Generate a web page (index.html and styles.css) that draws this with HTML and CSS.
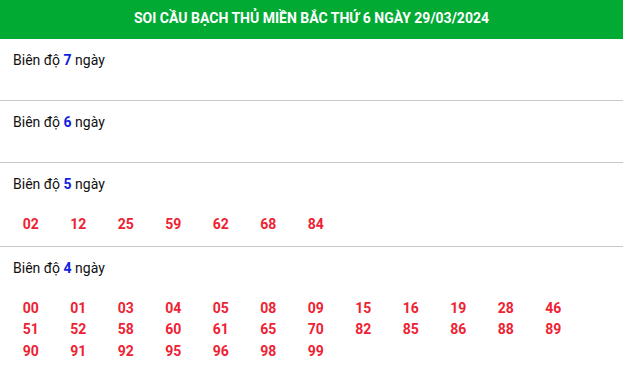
FILE: index.html
```html
<!DOCTYPE html>
<html lang="vi">
<head>
<meta charset="utf-8">
<link rel="stylesheet" href="styles.css">
</head>
<body>
<div class="box">
  <div class="head">SOI CẦU BẠCH THỦ MIỀN BẮC THỨ 6 NGÀY 29/03/2024</div>
  <div class="sec">
    <div class="title">Biên độ <b>7</b> ngày</div>
    <div class="nums"></div>
  </div>
  <div class="sec">
    <div class="title">Biên độ <b>6</b> ngày</div>
    <div class="nums"></div>
  </div>
  <div class="sec">
    <div class="title">Biên độ <b>5</b> ngày</div>
    <div class="nums">
      <span>02</span><span>12</span><span>25</span><span>59</span><span>62</span><span>68</span><span>84</span>
    </div>
  </div>
  <div class="sec">
    <div class="title">Biên độ <b>4</b> ngày</div>
    <div class="nums">
      <span>00</span><span>01</span><span>03</span><span>04</span><span>05</span><span>08</span><span>09</span><span>15</span><span>16</span><span>19</span><span>28</span><span>46</span>
      <span>51</span><span>52</span><span>58</span><span>60</span><span>61</span><span>65</span><span>70</span><span>82</span><span>85</span><span>86</span><span>88</span><span>89</span>
      <span>90</span><span>91</span><span>92</span><span>95</span><span>96</span><span>98</span><span>99</span>
    </div>
  </div>
</div>
</body>
</html>
```

FILE: styles.css
```css
html, body {
  margin: 0;
  padding: 0;
  background: #fff;
}
body {
  font-family: Roboto, "Liberation Sans", Arial, sans-serif;
  color: #111;
}
.head {
  background: #00aa33;
  color: #fff;
  font-weight: bold;
  font-size: 14px;
  height: 39px;
  line-height: 37px;
  text-align: center;
}
.sec {
  border-bottom: 1px solid #c8c8c8;
  padding: 11px 0 10px 13px;
}
.title {
  font-size: 14px;
  line-height: 20px;
  height: 20px;
}
.title b {
  color: #1122dd;
  font-weight: bold;
}
.nums {
  margin-top: 20px;
  margin-left: -6px;
  display: grid;
  grid-template-columns: repeat(12, 47.5px);
  grid-auto-rows: 21.5px;
  align-items: center;
}
.nums span {
  color: #ee2233;
  font-weight: bold;
  font-size: 14px;
  line-height: 21.5px;
  text-align: center;
}
```
